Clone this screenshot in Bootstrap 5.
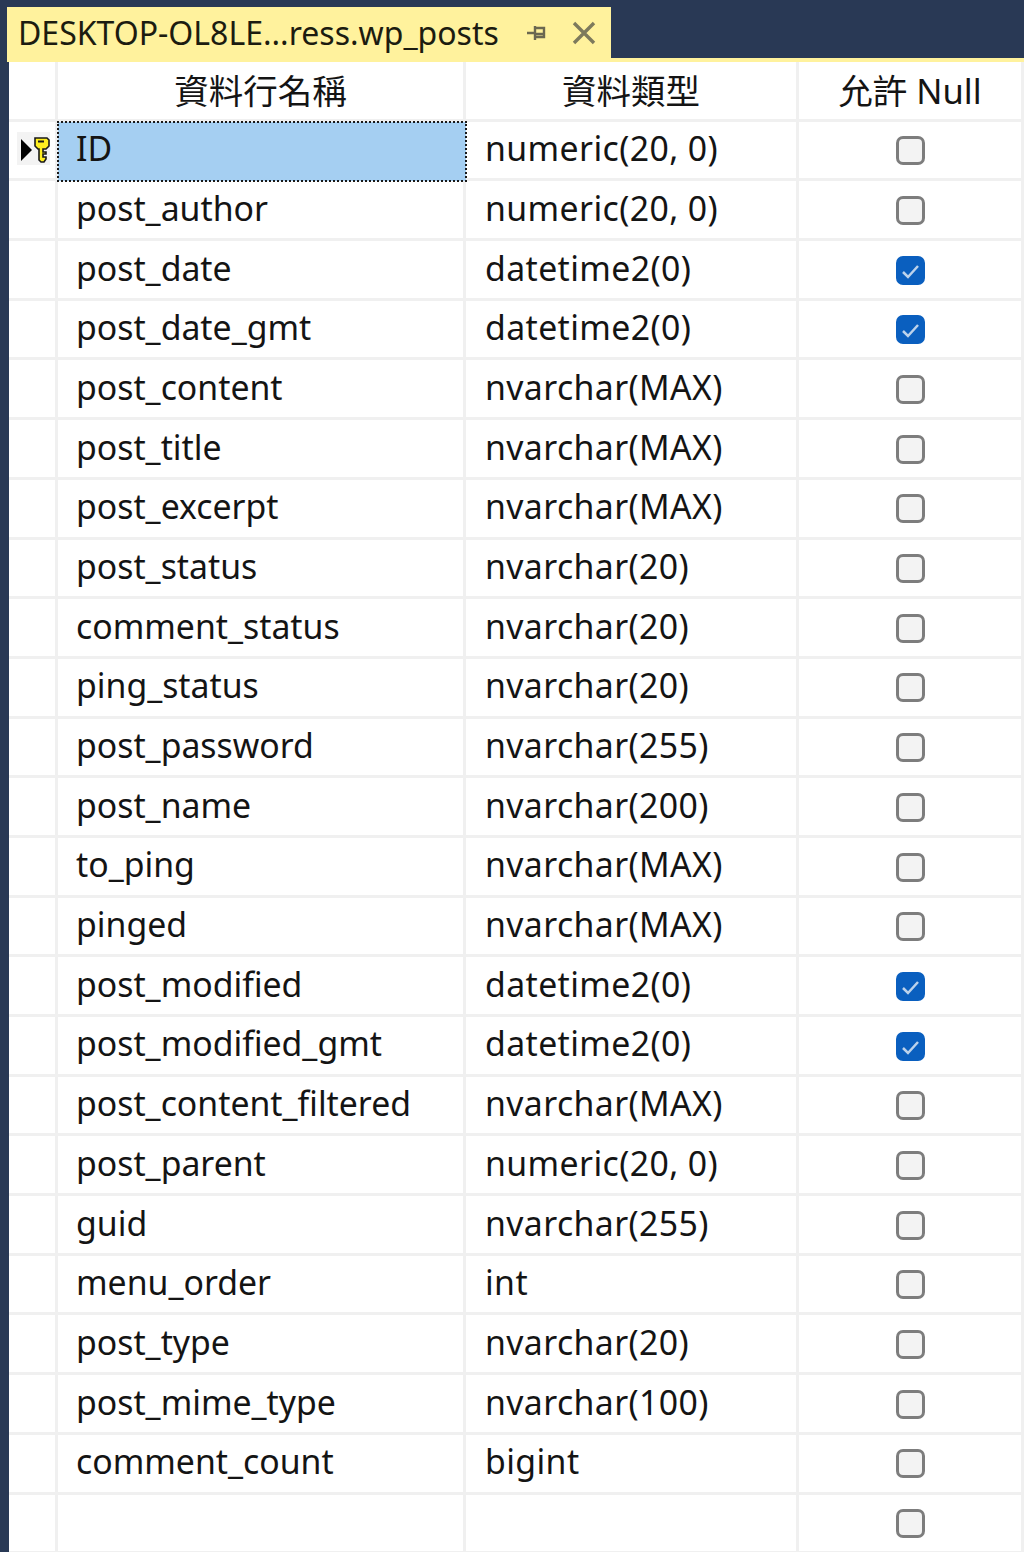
<!DOCTYPE html>
<html lang="zh-Hant">
<head>
    <meta charset="UTF-8">
    <title>DESKTOP-OL8LE...ress.wp_posts</title>
    <link href="https://cdn.jsdelivr.net/npm/bootstrap@5.3.0/dist/css/bootstrap.min.css" rel="stylesheet">
    <style>
        html, body { height: 100%; }
        body { background: #293955; overflow: hidden; font-family: "Noto Sans", "Noto Sans CJK TC", sans-serif; color: #1a1a1a; }
        .tab-strip { height: 62px; padding: 7px 0 0 7px; }
        .doc-tab { width: 604px; height: 55px; background: #fff29d; padding: 0 15px 4px 11px; font-size: 32px; line-height: 1; color: #1c1c10; }
        .tab-rule { height: 4px; background: #fff29d; margin-top: -4px; margin-left: 7px; }
        .design-wrap { margin-left: 9px; background: #fff; height: 1490px; overflow: hidden; }
        .design-grid { table-layout: fixed; width: 1015px; margin: 0; border-collapse: separate; border-spacing: 0; font-size: 33.8px; }
        .design-grid th, .design-grid td { height: 59.7px; padding: 0 0 4px; vertical-align: middle; border: 0; border-right: 3px solid #f0f0f0; border-bottom: 3px solid #f0f0f0; font-weight: 400; background: #fff; color: #141414; box-shadow: none; line-height: 1; }
        .design-grid th { text-align: center; font-size: 34.5px; padding: 2px 0 0; }
        .design-grid td.col-name { padding: 0 0 2px 18px; }
        .design-grid td.col-type { padding: 0 0 2px 19px; letter-spacing: .4px; }
        .design-grid .col-null { text-align: center; }
        .design-grid td.cell-active { background: #a5cff2; border-color: #a5cff2; outline: 2px dotted #1a1a1a; outline-offset: -1px; }
        .row-marker { width: 33px; height: 33px; margin-left: 8px; background: #f3f3f3; }
        .null-box.form-check-input { width: 29px; height: 29px; margin: 0; float: none; vertical-align: middle; background-color: #f3f3f3; border: 3px solid #7d7d7d; border-radius: 7px; opacity: 1; }
        .null-box.form-check-input:checked { background-color: #0a5fbf; border-color: #0a5fbf; background-size: 100%; background-image: url("data:image/svg+xml,%3csvg xmlns='http://www.w3.org/2000/svg' viewBox='0 0 23 23'%3e%3cpath fill='none' stroke='%23bcd2eb' stroke-width='2.5' d='M4 13l5 5L19 7'/%3e%3c/svg%3e"); }
    </style>
</head>
<body>
    <div class="tab-strip">
        <div class="doc-tab d-flex align-items-center justify-content-between">
            <span>DESKTOP-OL8LE...ress.wp_posts</span>
            <span class="d-flex align-items-center gap-4">
                <svg width="22" height="22" viewBox="0 0 22 22" fill="none" stroke="#6b6850" stroke-width="2.4"><path d="M1 11h8M9 4v14M9 6h9v9H9M9 12h9"/></svg>
                <svg width="24" height="24" viewBox="0 0 24 24" fill="none" stroke="#7d7a5c" stroke-width="3.4"><path d="M2 2l20 20M22 2L2 22"/></svg>
            </span>
        </div>
    </div>
    <div class="tab-rule"></div>
    <div class="design-wrap">
        <table class="table design-grid">
            <colgroup>
                <col style="width:49px"><col style="width:408px"><col style="width:333px"><col style="width:225px">
            </colgroup>
            <thead>
                <tr><th></th><th>資料行名稱</th><th>資料類型</th><th>允許 Null</th></tr>
            </thead>
            <tbody id="rows">
                <tr>
                    <td>
                        <div class="row-marker">
                            <svg class="d-block" width="33" height="33" viewBox="0 0 33 33">
                                <path d="M4 7l11 11L4 29z" fill="#000"/>
                                <path d="M18 6h12l2 2v6l-3 3h-3v3h3v2h-3v3h3v2l-2 3h-3l-2-2V17h-1l-3-3V8z" fill="#ffef1f" stroke="#1a1a1a" stroke-width="1.6"/>
                                <path d="M21 9.5h6" stroke="#1a1a1a" stroke-width="2"/>
                            </svg>
                        </div>
                    </td>
                    <td class="col-name cell-active">ID</td>
                    <td class="col-type">numeric(20, 0)</td>
                    <td class="col-null"><input class="form-check-input null-box" type="checkbox"></td>
                </tr>
            </tbody>
        </table>
    </div>

    <script>
        // remaining columns of wp_posts: name, type, allow null
        const columns = [
            ['post_author', 'numeric(20, 0)', false],
            ['post_date', 'datetime2(0)', true],
            ['post_date_gmt', 'datetime2(0)', true],
            ['post_content', 'nvarchar(MAX)', false],
            ['post_title', 'nvarchar(MAX)', false],
            ['post_excerpt', 'nvarchar(MAX)', false],
            ['post_status', 'nvarchar(20)', false],
            ['comment_status', 'nvarchar(20)', false],
            ['ping_status', 'nvarchar(20)', false],
            ['post_password', 'nvarchar(255)', false],
            ['post_name', 'nvarchar(200)', false],
            ['to_ping', 'nvarchar(MAX)', false],
            ['pinged', 'nvarchar(MAX)', false],
            ['post_modified', 'datetime2(0)', true],
            ['post_modified_gmt', 'datetime2(0)', true],
            ['post_content_filtered', 'nvarchar(MAX)', false],
            ['post_parent', 'numeric(20, 0)', false],
            ['guid', 'nvarchar(255)', false],
            ['menu_order', 'int', false],
            ['post_type', 'nvarchar(20)', false],
            ['post_mime_type', 'nvarchar(100)', false],
            ['comment_count', 'bigint', false],
            ['', '', false]
        ];
        const tbody = document.getElementById('rows');
        columns.forEach(([name, type, allowNull]) => {
            const tr = document.createElement('tr');
            tr.innerHTML = `
                <td></td>
                <td class="col-name">${name}</td>
                <td class="col-type">${type}</td>
                <td class="col-null"><input class="form-check-input null-box" type="checkbox" ${allowNull ? 'checked' : ''}></td>
            `;
            tbody.appendChild(tr);
        });
    </script>
    <script src="https://cdn.jsdelivr.net/npm/bootstrap@5.3.0/dist/js/bootstrap.bundle.min.js"></script>
</body>
</html>
